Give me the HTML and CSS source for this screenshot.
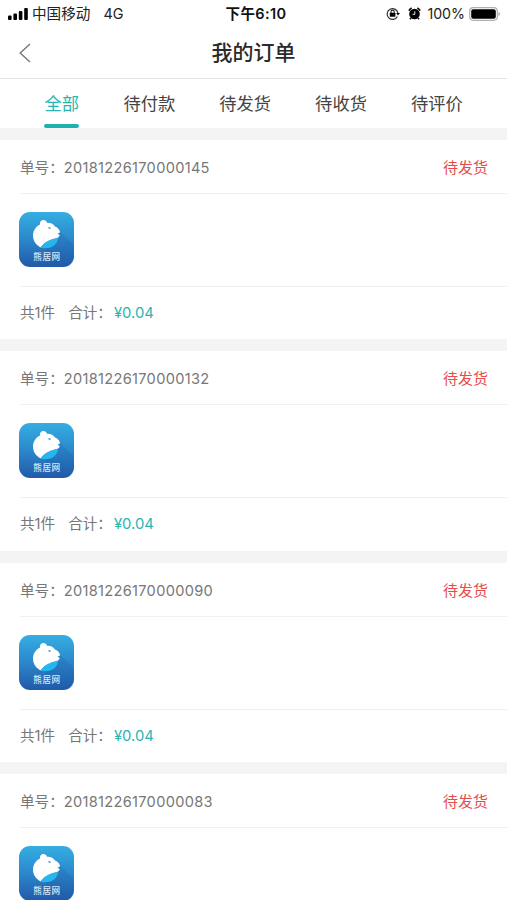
FILE: index.html
```
<!DOCTYPE html>
<html lang="zh-CN">
<head>
    <meta charset="UTF-8">
    <meta name="viewport" content="width=device-width, initial-scale=1.0">
    <title>我的订单</title>
    <link rel="stylesheet" href="styles.css">
</head>
<body>
    <svg class="defs" width="0" height="0">
        <defs>
            <linearGradient id="logo-bg" x1="0" y1="0" x2="0" y2="1">
                <stop offset="0" stop-color="#35aee2"/>
                <stop offset="0.5" stop-color="#2b87cb"/>
                <stop offset="1" stop-color="#2259a8"/>
            </linearGradient>
            <symbol id="logo" viewBox="0 0 55 55">
                <rect width="55" height="55" rx="11" fill="url(#logo-bg)"/>
                <path d="M40 19L55 33V44Q55 55 44 55H39L24 35Z" fill="#1c5ba9" opacity="0.22"/>
                <path d="M21.500 35.500C16.500 32.500 14 28.500 14 23.500C14 18.500 17 14.500 21 12.500C20.500 9 23 7.500 25 8C26.700 8.400 27.500 9.500 28 10.800C31.500 10.500 34.500 12 36 14.500C39 15.500 41 18 41 20.500L38.500 21.800L40.800 23C40 24.800 39.500 25.500 38 26C31 27.500 25.500 30.500 21.500 35.500Z" fill="#fff"/>
                <path d="M21.500 35.500C25.500 30 31 26.800 39 26C38.500 33 31 38.500 21.500 35.500Z" fill="#27b5ed"/>
                <path d="M29.500 15.700L31.500 16.300" stroke="#2b87cb" stroke-width="1.300"/>
                <text class="logo-text" x="28" y="48.200" text-anchor="middle">熊居网</text>
            </symbol>
        </defs>
    </svg>

    <div class="status-bar">
        <div class="carrier">
            <svg width="20" height="12" viewBox="0 0 20 12">
                <rect x="0" y="7.500" width="3.600" height="4.500" rx="1"/>
                <rect x="5.400" y="5.500" width="3.600" height="6.500" rx="1"/>
                <rect x="10.800" y="3" width="3.600" height="9" rx="1"/>
                <rect x="16.200" y="0" width="3.600" height="12" rx="1"/>
            </svg>
            <span class="operator">中国移动</span>
            <span class="network">4G</span>
        </div>
        <div class="time">下午6:10</div>
        <div class="indicators">
            <svg class="lock" width="14" height="13" viewBox="0 0 14 13">
                <path d="M11.400 9.500A5.400 5.400 0 1 1 11.900 6" fill="none" stroke="#333" stroke-width="1.200"/>
                <path d="M10.100 6H14L12 8.500Z"/>
                <rect x="3.800" y="5.700" width="5.600" height="4" rx="0.500"/>
                <path d="M5 6V4.700A1.600 1.600 0 0 1 8.200 4.700V6" fill="none" stroke="#222" stroke-width="1.100"/>
            </svg>
            <svg class="alarm" width="13" height="13" viewBox="0 0 13 13">
                <circle cx="6.500" cy="7" r="5.300"/>
                <path d="M0.900 3.700A8 8 0 0 1 3.700 1.100M9.300 1.100A8 8 0 0 1 12.100 3.700M3 11L2 12.300M10 11L11 12.300" fill="none" stroke="#111" stroke-width="1.700"/>
                <path d="M6.800 4.300V7.300H4.500" fill="none" stroke="#fff" stroke-width="0.900"/>
            </svg>
            <span class="percent">100%</span>
            <svg width="31" height="14" viewBox="0 0 31 14">
                <rect x="0.700" y="0.700" width="27.600" height="12.600" rx="3.500" fill="none" stroke="#b0b0b0" stroke-width="1.200"/>
                <rect x="2.200" y="2.200" width="24.600" height="9.600" rx="2"/>
                <path d="M29.500 5V9Q31 8.500 31 7T29.500 5Z" fill="#aaa"/>
            </svg>
        </div>
    </div>

    <div class="header">
        <svg class="back" width="12" height="20" viewBox="0 0 12 20">
            <path d="M11 1L1.200 10L11 19" fill="none" stroke="#777" stroke-width="1.400"/>
        </svg>
        <h1>我的订单</h1>
    </div>

    <div class="tabs">
        <span class="tab active">全部</span>
        <span class="tab">待付款</span>
        <span class="tab">待发货</span>
        <span class="tab">待收货</span>
        <span class="tab">待评价</span>
    </div>

    <div class="orders">
        <div class="order">
            <div class="order-head">
                <span>单号：<span class="number">20181226170000145</span></span>
                <span class="state">待发货</span>
            </div>
            <div class="order-body"><svg class="logo"><use href="#logo"/></svg></div>
            <div class="order-foot"><span class="count">共1件</span>合计：<span class="price">¥0.04</span></div>
        </div>
        <div class="order">
            <div class="order-head">
                <span>单号：<span class="number">20181226170000132</span></span>
                <span class="state">待发货</span>
            </div>
            <div class="order-body"><svg class="logo"><use href="#logo"/></svg></div>
            <div class="order-foot"><span class="count">共1件</span>合计：<span class="price">¥0.04</span></div>
        </div>
        <div class="order">
            <div class="order-head">
                <span>单号：<span class="number">20181226170000090</span></span>
                <span class="state">待发货</span>
            </div>
            <div class="order-body"><svg class="logo"><use href="#logo"/></svg></div>
            <div class="order-foot"><span class="count">共1件</span>合计：<span class="price">¥0.04</span></div>
        </div>
        <div class="order last">
            <div class="order-head">
                <span>单号：<span class="number">20181226170000083</span></span>
                <span class="state">待发货</span>
            </div>
            <div class="order-body"><svg class="logo"><use href="#logo"/></svg></div>
        </div>
    </div>
</body>
</html>
```
FILE: styles.css
```
* {
    box-sizing: border-box;
}
body {
    margin: 0;
    height: 900px;
    overflow: hidden;
    display: flex;
    flex-direction: column;
    font-family: Inter, "Noto Sans CJK SC", sans-serif;
    color: #333;
    background-color: #fff;
}
svg {
    display: block;
    flex-shrink: 0;
}
.status-bar {
    display: grid;
    grid-template-columns: 1fr auto 1fr;
    align-items: center;
    height: 27px;
    flex-shrink: 0;
    padding: 0 7px 0 8px;
    font-size: 14.6px;
    line-height: 27px;
    color: #222;
}
.carrier {
    display: flex;
    align-items: center;
    gap: 4px;
}
.operator {
    padding-top: 1px;
    line-height: 26px;
}
.network {
    margin-left: 9px;
    font-size: 14.4px;
}
.time {
    padding-left: 4px;
    font-size: 14.5px;
    font-weight: 600;
    letter-spacing: 0.4px;
    color: #111;
}
.indicators {
    display: flex;
    align-items: center;
    justify-content: flex-end;
}
.lock {
    margin-right: 8px;
}
.alarm {
    margin-right: 6px;
}
.percent {
    font-size: 14.2px;
    margin-right: 4px;
}
.header {
    display: grid;
    grid-template-columns: 1fr auto 1fr;
    align-items: center;
    height: 52px;
    flex-shrink: 0;
    padding: 0 19px;
    border-bottom: 1px solid #e2e2e2;
}
h1 {
    margin: 0;
    font-size: 21px;
    font-weight: 500;
    line-height: 50px;
    color: #2b2b2b;
}
.tabs {
    display: flex;
    gap: 44px;
    height: 49px;
    flex-shrink: 0;
    padding-left: 44.4px;
}
.tab {
    font-size: 17.3px;
    line-height: 49px;
    color: #444;
}
.tab.active {
    color: #27b5b3;
}
.tab.active::after {
    content: "";
    display: block;
    width: 35px;
    height: 4px;
    margin-top: -4px;
    border-radius: 2px;
    background-color: #1fb1ae;
}
.orders {
    display: flex;
    flex-direction: column;
    gap: 12px;
    flex: 1;
    min-height: 0;
    padding-top: 12px;
    overflow: hidden;
    background-color: #f4f4f4;
}
.order {
    height: 199.33px;
    flex-shrink: 0;
    padding-left: 20px;
    font-size: 14.6px;
    color: #777;
    background-color: #fff;
}
.order.last {
    height: 127px;
}
.order-head {
    display: flex;
    justify-content: space-between;
    height: 54px;
    padding-right: 19px;
    line-height: 56px;
    border-bottom: 1px solid #f0f0f0;
}
.number {
    font-size: 14.6px;
    letter-spacing: 0.3px;
}
.state {
    font-size: 15px;
    line-height: 55px;
    color: #e64c4c;
}
.order-body {
    height: 93px;
    padding-top: 18px;
    border-bottom: 1px solid #f0f0f0;
}
.last .order-body {
    height: 73px;
    border-bottom: none;
}
.logo {
    width: 55px;
    height: 55px;
    margin-left: -1px;
}
.logo-text {
    font-size: 8.6px;
    font-weight: 500;
    letter-spacing: 0.5px;
    fill: #d8e8f6;
}
.order-foot {
    line-height: 52px;
}
.count {
    margin-right: 13px;
}
.price {
    margin-left: 2px;
    font-size: 14.8px;
    color: #29b6b0;
}
```
